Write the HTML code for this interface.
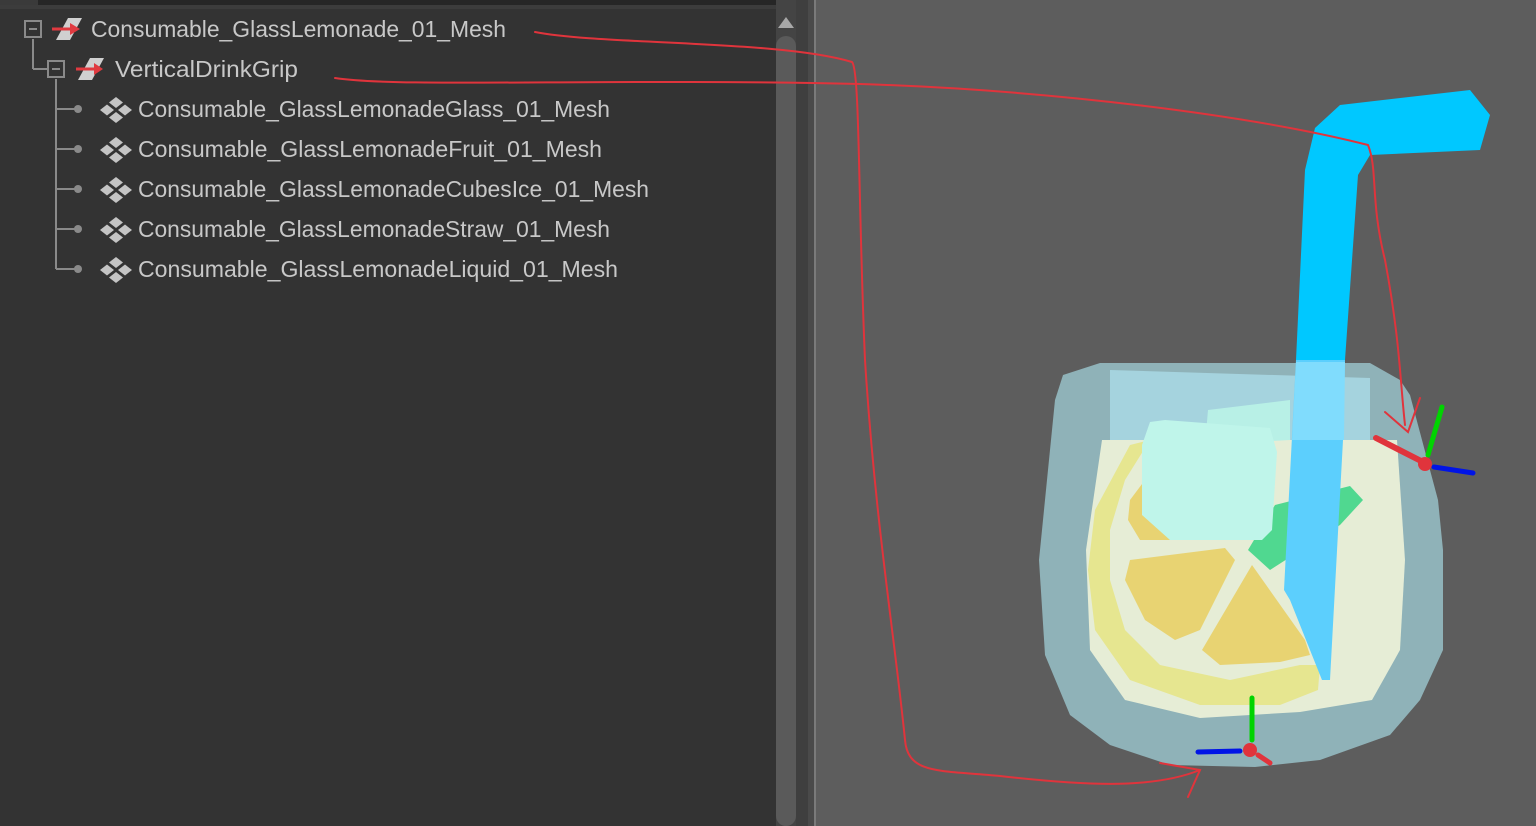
<!DOCTYPE html>
<html><head><meta charset="utf-8"><style>
html,body{margin:0;padding:0;width:1536px;height:826px;overflow:hidden;background:#5d5d5d}
svg{display:block}
text{font-family:"Liberation Sans",sans-serif;font-size:23px;fill:#c8c8c8}
</style></head><body>
<svg width="1536" height="826" viewBox="0 0 1536 826" xmlns="http://www.w3.org/2000/svg">
<rect x="0" y="0" width="776" height="826" fill="#333333"/>
<rect x="0" y="0" width="38" height="6" fill="#3a3a3a"/>
<rect x="38" y="0" width="757" height="5" fill="#262626"/>
<rect x="0" y="5" width="776" height="4" fill="#3c3c3c"/>
<rect x="776" y="0" width="20" height="826" fill="#444444"/>
<polygon points="778,28 786,17 794,28" fill="#a8a8a8"/>
<rect x="776" y="36" width="20" height="790" rx="10" fill="#5a5a5a"/>
<rect x="796" y="0" width="12" height="826" fill="#3f3f3f"/>
<rect x="808" y="0" width="6" height="826" fill="#4a4a4a"/>
<rect x="814" y="0" width="2" height="826" fill="#7a7a7a"/>
<rect x="816" y="0" width="720" height="826" fill="#5d5d5d"/>

<g stroke="#8a8a8a" stroke-width="2" fill="none">
<line x1="33" y1="39" x2="33" y2="69"/><line x1="33" y1="69" x2="48" y2="69"/>
<line x1="56" y1="79" x2="56" y2="269"/>
<line x1="56" y1="109" x2="76" y2="109"/><line x1="56" y1="149" x2="76" y2="149"/>
<line x1="56" y1="189" x2="76" y2="189"/><line x1="56" y1="229" x2="76" y2="229"/>
<line x1="56" y1="269" x2="76" y2="269"/>
<rect x="25" y="21" width="16" height="16"/><line x1="29" y1="29" x2="37" y2="29"/>
<rect x="48" y="61" width="16" height="16"/><line x1="52" y1="69" x2="60" y2="69"/>
</g>
<g fill="#8a8a8a"><circle cx="78" cy="109" r="4"/><circle cx="78" cy="149" r="4"/><circle cx="78" cy="189" r="4"/><circle cx="78" cy="229" r="4"/><circle cx="78" cy="269" r="4"/></g>
<g>
<polygon points="56,40 68,18 82,18 70,40" fill="#d0d0d0"/>
<line x1="52" y1="29" x2="72" y2="29" stroke="#e03a40" stroke-width="3"/><polygon points="70,23 80,29 70,35" fill="#e03a40"/>
<polygon points="78,80 90,58 104,58 92,80" fill="#d0d0d0"/>
<line x1="76" y1="69" x2="96" y2="69" stroke="#e03a40" stroke-width="3"/><polygon points="94,63 103,69 94,75" fill="#e03a40"/>
</g>
<defs><g id="m" fill="#c4c4c4">
<polygon points="0,-13 7,-7.5 0,-2 -7,-7.5"/>
<polygon points="-9,-5.5 -2,0 -9,5.5 -16,0"/>
<polygon points="9,-5.5 16,0 9,5.5 2,0"/>
<polygon points="0,2 7,7.5 0,13 -7,7.5"/>
</g></defs>
<use href="#m" x="116" y="110"/><use href="#m" x="116" y="150"/><use href="#m" x="116" y="190"/><use href="#m" x="116" y="230"/><use href="#m" x="116" y="270"/>
<text x="91" y="37" textLength="415" lengthAdjust="spacingAndGlyphs">Consumable_GlassLemonade_01_Mesh</text>
<text x="115" y="77" textLength="183" lengthAdjust="spacingAndGlyphs">VerticalDrinkGrip</text>
<text x="138" y="117" textLength="472" lengthAdjust="spacingAndGlyphs">Consumable_GlassLemonadeGlass_01_Mesh</text>
<text x="138" y="157" textLength="464" lengthAdjust="spacingAndGlyphs">Consumable_GlassLemonadeFruit_01_Mesh</text>
<text x="138" y="197" textLength="511" lengthAdjust="spacingAndGlyphs">Consumable_GlassLemonadeCubesIce_01_Mesh</text>
<text x="138" y="237" textLength="472" lengthAdjust="spacingAndGlyphs">Consumable_GlassLemonadeStraw_01_Mesh</text>
<text x="138" y="277" textLength="480" lengthAdjust="spacingAndGlyphs">Consumable_GlassLemonadeLiquid_01_Mesh</text>

<polygon points="1305,170 1315,128 1340,105 1470,90 1490,115 1480,150 1370,155 1358,175 1345,360 1296,360" fill="#00c8ff"/>
<polygon points="1063,375 1100,363 1370,363 1400,380 1410,395 1438,500 1443,550 1443,650 1420,700 1390,735 1320,760 1255,767 1170,765 1110,745 1070,715 1045,655 1039,560 1055,400" fill="#8fb2b8"/>
<polygon points="1110,370 1370,378 1370,440 1110,440" fill="#a5d3de"/>
<polygon points="1102,440 1397,440 1405,560 1400,650 1372,700 1300,712 1200,718 1125,700 1090,650 1086,550" fill="#e6edd6"/>
<polygon points="1130,445 1150,440 1125,480 1110,530 1110,580 1125,630 1160,665 1230,680 1300,665 1320,665 1318,690 1280,705 1200,705 1130,680 1095,630 1088,570 1095,510" fill="#e6e690"/>
<polygon points="1130,500 1145,480 1150,520 1175,540 1140,540 1128,520" fill="#e8d372"/>
<polygon points="1130,560 1225,548 1235,560 1200,630 1175,640 1145,620 1125,580" fill="#e8d372"/>
<polygon points="1252,565 1305,640 1310,655 1280,662 1220,665 1202,650" fill="#e8d372"/>
<polygon points="1275,505 1350,486 1363,500 1340,525 1270,570 1248,550" fill="#50d890"/>
<polygon points="1208,410 1290,400 1290,440 1205,445" fill="#b8f0e6"/>
<polygon points="1150,422 1165,420 1270,428 1277,452 1272,530 1262,540 1170,540 1142,515 1142,445" fill="#bff5ea"/>
<polygon points="1296,360 1345,360 1343,440 1330,680 1322,680 1290,600 1284,590" fill="#5ccffd"/>
<polygon points="1296,362 1345,362 1344,440 1292,440" fill="#80dcfd"/>

<g stroke-linecap="round">
<line x1="1425" y1="463" x2="1376" y2="438" stroke="#e0343c" stroke-width="6"/>
<line x1="1428" y1="455" x2="1442" y2="407" stroke="#00d400" stroke-width="5"/>
<line x1="1434" y1="467" x2="1473" y2="473" stroke="#0014e6" stroke-width="5"/>
<line x1="1252" y1="740" x2="1252" y2="698" stroke="#00d400" stroke-width="5"/>
<line x1="1240" y1="751" x2="1198" y2="752" stroke="#0014e6" stroke-width="5"/>
<line x1="1258" y1="755" x2="1270" y2="763" stroke="#e0343c" stroke-width="5"/>
</g>
<circle cx="1425" cy="464" r="7" fill="#e0343c"/>
<circle cx="1250" cy="750" r="7" fill="#e0343c"/>

<g stroke="#e0343c" stroke-width="2" fill="none" stroke-linecap="round">
<path d="M535,32 C600,45 780,40 852,62 C860,70 858,200 865,360 C875,520 895,640 905,740 C908,775 940,770 1000,776 C1080,785 1150,790 1200,770"/>
<path d="M1160,763 L1200,770 L1188,797"/>
<path d="M335,78 C400,88 600,78 860,84 C1050,90 1250,115 1368,145 C1378,170 1370,200 1385,260 C1400,340 1400,380 1405,425"/>
<path d="M1385,412 L1408,432 L1420,398"/>
</g>
</svg>
</body></html>
